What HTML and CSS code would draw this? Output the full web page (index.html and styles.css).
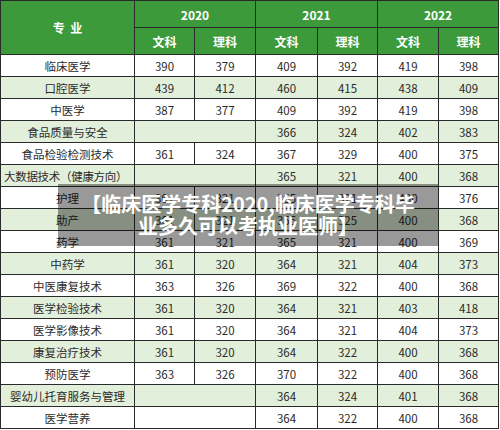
FILE: index.html
```html
<!DOCTYPE html>
<html lang="zh-CN">
<head>
    <meta charset="UTF-8">
    <title>临床医学专科2020</title>
    <link rel="stylesheet" href="styles.css">
</head>
<body>
<div class="page">
    <table class="scores">
        <colgroup>
            <col class="c-name">
            <col class="c-60"><col class="c-61">
            <col class="c-62"><col class="c-60">
            <col class="c-61"><col class="c-60">
        </colgroup>
        <tr class="head">
            <th rowspan="2">专&nbsp;&nbsp;业</th>
            <th colspan="2">2020</th>
            <th colspan="2">2021</th>
            <th colspan="2">2022</th>
        </tr>
        <tr class="head">
            <th>文科</th><th>理科</th>
            <th>文科</th><th>理科</th>
            <th>文科</th><th>理科</th>
        </tr>
        <tr><td>临床医学</td><td>390</td><td>379</td><td>409</td><td>392</td><td>419</td><td>398</td></tr>
        <tr class="alt"><td>口腔医学</td><td>439</td><td>412</td><td>460</td><td>415</td><td>438</td><td>409</td></tr>
        <tr><td>中医学</td><td>387</td><td>377</td><td>409</td><td>392</td><td>419</td><td>398</td></tr>
        <tr class="alt"><td>食品质量与安全</td><td colspan="2"></td><td>366</td><td>324</td><td>402</td><td>383</td></tr>
        <tr><td>食品检验检测技术</td><td>361</td><td>324</td><td>367</td><td>329</td><td>400</td><td>375</td></tr>
        <tr class="alt"><td class="left">大数据技术（健康方向）</td><td colspan="2"></td><td>365</td><td>321</td><td>400</td><td>368</td></tr>
        <tr><td>护理</td><td>361</td><td>321</td><td>365</td><td>321</td><td>400</td><td>376</td></tr>
        <tr class="alt"><td>助产</td><td>361</td><td>321</td><td>365</td><td>325</td><td>400</td><td>368</td></tr>
        <tr><td>药学</td><td>361</td><td>321</td><td>365</td><td>321</td><td>400</td><td>369</td></tr>
        <tr class="alt"><td>中药学</td><td>361</td><td>320</td><td>364</td><td>321</td><td>404</td><td>373</td></tr>
        <tr><td>中医康复技术</td><td>363</td><td>326</td><td>369</td><td>322</td><td>400</td><td>368</td></tr>
        <tr class="alt"><td>医学检验技术</td><td>361</td><td>320</td><td>364</td><td>321</td><td>403</td><td>418</td></tr>
        <tr><td>医学影像技术</td><td>361</td><td>320</td><td>364</td><td>321</td><td>404</td><td>373</td></tr>
        <tr class="alt"><td>康复治疗技术</td><td>361</td><td>320</td><td>364</td><td>322</td><td>400</td><td>368</td></tr>
        <tr><td>预防医学</td><td>363</td><td>326</td><td>370</td><td>322</td><td>400</td><td>368</td></tr>
        <tr class="alt"><td>婴幼儿托育服务与管理</td><td colspan="2"></td><td>364</td><td>324</td><td>401</td><td>368</td></tr>
        <tr><td>医学营养</td><td colspan="2"></td><td>364</td><td>322</td><td>400</td><td>368</td></tr>
    </table>
    <div class="caption">【临床医学专科2020,临床医学专科毕<br>业多久可以考执业医师】</div>
</div>
</body>
</html>
```

FILE: styles.css
```css
body{
    margin: 0;
    background: #fff;
}
.page{
    position: relative;
    width: 500px;
    height: 430px;
    overflow: hidden;
}
.scores{
    width: 499px;
    table-layout: fixed;
    border-collapse: collapse;
    font-family: "Noto Sans CJK SC", "Noto Sans", sans-serif;
    font-size: 11.5px;
    color: #2b2b2b;
}
.c-name{ width: 134px; }
.c-60{ width: 60px; }
.c-61{ width: 61px; }
.c-62{ width: 62px; }
th, td{
    border: 1px solid #2a2a2a;
    padding: 0;
    text-align: center;
    white-space: nowrap;
    overflow: visible;
}
.head th{
    height: 26px;
    background: #3d9a3b;
    color: #fff;
    font-size: 12px;
    font-weight: bold;
}
td{
    height: 21px;
    background: #fff;
}
.alt td{
    background: #e2efda;
}
td.left{
    text-align: left;
    padding-left: 3px;
    letter-spacing: -0.3px;
}
.caption{
    position: absolute;
    left: 58px;
    top: 184px;
    width: 380px;
    height: 62px;
    display: flex;
    align-items: center;
    justify-content: center;
    background: rgba(0, 0, 0, 0.4);
    color: #fff;
    font-family: "Noto Sans CJK SC", "Noto Sans", sans-serif;
    font-size: 20px;
    font-weight: bold;
    line-height: 22px;
    text-align: center;
    white-space: nowrap;
}
```
